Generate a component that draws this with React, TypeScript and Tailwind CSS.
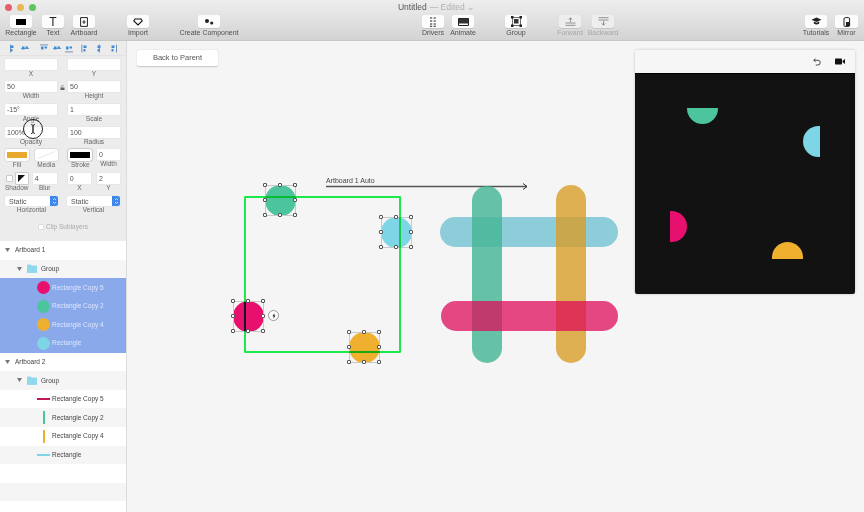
import React from "react";

const FONT = { fontFamily: '"Liberation Sans", Arial, sans-serif' };

function ToolItem({ label, ml, off, children, w }: { label: string; ml: string; off?: boolean; children: React.ReactNode; w?: string }) {
  return (
    <div className={`flex flex-col items-center ${ml} ${w ?? "w-[22px]"}`}>
      <div className={`flex h-[13px] w-full items-center justify-center rounded-[2px] shadow-[0_0.5px_0.5px_rgba(0,0,0,0.2)] ${off ? "bg-[#eeeeee]" : "bg-[#fcfcfc]"}`}>{children}</div>
      <span className={`whitespace-nowrap text-[7px] leading-[10px] ${off ? "text-[#a8a8a8]" : "text-[#505050]"}`}>{label}</span>
    </div>
  );
}

function Svg({ children, w = 12, h = 10 }: { children: React.ReactNode; w?: number; h?: number }) {
  return <svg width={w} height={h} viewBox={`0 0 ${w} ${h}`} fill="none">{children}</svg>;
}

function Field({ value, label, w = "w-[52px]" }: { value?: string; label: string; w?: string }) {
  return (
    <div className={`flex flex-col items-center ${w}`}>
      <div className="flex h-[11px] w-full items-center bg-white px-[2px] text-[7px] leading-none text-[#555] shadow-[0_0_0_0.5px_#e2e2e2]">{value}</div>
      <span className="whitespace-nowrap text-[6.5px] leading-[8px] text-[#666]">{label}</span>
    </div>
  );
}

function AlignIcon({ v, dir }: { v: number; dir: "h" | "v" }) {
  const blue = "#3f8bd9";
  return (
    <svg width="8" height="9" viewBox="0 0 8 9" fill="none">
      {dir === "v" ? (
        <>
          <rect x={v} y="0.5" width="0.8" height="8" fill="#5f7fa0" />
          <rect x="2.5" y="1.5" width="3" height="2.5" fill={blue} />
          <rect x="2.5" y="5" width="2" height="2.5" fill={blue} />
        </>
      ) : (
        <>
          <rect x="0" y={v} width="8" height="0.8" fill="#5f7fa0" />
          <rect x="1" y="2.5" width="2.5" height="3" fill={blue} />
          <rect x="4.5" y="2.5" width="2.5" height="2" fill={blue} />
        </>
      )}
    </svg>
  );
}

function Select({ label, w }: { label: string; w: string }) {
  return (
    <div className={`flex flex-col items-center ${w}`}>
      <div className="flex h-[10px] w-full items-center justify-between rounded-[2px] bg-white pl-[4px] text-[7px] leading-none text-[#555] shadow-[0_0_0_0.5px_#e2e2e2]">
        <span>Static</span>
        <span className="flex h-full w-[8px] items-center justify-center rounded-r-[2px] bg-[#3d87ee]">
          <svg width="5" height="8" viewBox="0 0 5 8" fill="none"><path d="M1 3L2.5 1.5L4 3M1 5L2.5 6.5L4 5" stroke="white" strokeWidth="0.7" /></svg>
        </span>
      </div>
      <span className="text-[6.5px] leading-[8px] text-[#666]">{label}</span>
    </div>
  );
}

function Tri() {
  return <svg width="5" height="4" viewBox="0 0 5 4"><path d="M0 0H5L2.5 4Z" fill="#777" /></svg>;
}

function Folder() {
  return (
    <svg width="10" height="9" viewBox="0 0 10 9">
      <path d="M0 1.2Q0 0.5 0.7 0.5H3.5L4.5 1.5H9.3Q10 1.5 10 2.2V8.3Q10 9 9.3 9H0.7Q0 9 0 8.3Z" fill="#8fd8ee" />
    </svg>
  );
}

function Row({ bg, pl, children, text = "text-[#444]" }: { bg: string; pl: string; children?: React.ReactNode; text?: string }) {
  return <div className={`flex h-[18.6px] items-center whitespace-nowrap text-[6.5px] ${bg} ${pl} ${text}`}>{children}</div>;
}

function Thumb({ children }: { children: React.ReactNode }) {
  return <span className="mr-[2px] flex h-[14px] w-[13px] items-center justify-center">{children}</span>;
}

function Selection({ cx, cy, color }: { cx: number; cy: number; color: string }) {
  return (
    <>
      <div className={`absolute h-[31px] w-[31px] rounded-full ${color}`} style={{ left: cx - 15.5, top: cy - 15.5 }} />
      <div className="absolute h-[31px] w-[31px] border border-[#c8c8c8]" style={{ left: cx - 15.5, top: cy - 15.5 }} />
    </>
  );
}

function Handles({ cx, cy }: { cx: number; cy: number }) {
  const pts = [-15.3, 0, 15.3];
  return (
    <>
      {pts.flatMap((dx) =>
        pts.map((dy) =>
          dx === 0 && dy === 0 ? null : (
            <div key={`${dx}${dy}`} className="absolute h-[4px] w-[4px] rounded-[1px] border border-[#555] bg-white" style={{ left: cx + dx - 2, top: cy + dy - 2 }} />
          )
        )
      )}
    </>
  );
}

export default function App() {
  return (
    <div className="flex h-[512px] w-[864px] flex-col overflow-hidden bg-[#f5f5f5]" style={FONT}>
      {/* Title + toolbar */}
      <header className="flex h-[41px] shrink-0 flex-col border-b border-[#c8c8c8] bg-gradient-to-b from-[#eeeeee] to-[#d3d3d3]">
        <div className="relative flex h-[15px] shrink-0 items-center justify-center pl-[9px] text-[8.5px] text-[#555]">
          <div className="absolute left-[4.5px] top-[3.5px] flex gap-[5px]">
            <span className="h-[7px] w-[7px] rounded-full bg-[#e4606a]" />
            <span className="h-[7px] w-[7px] rounded-full bg-[#e9b84e]" />
            <span className="h-[7px] w-[7px] rounded-full bg-[#62c364]" />
          </div>
          <span>Untitled</span>
          <span className="ml-[3px] text-[#b0b0b0]">— Edited ⌄</span>
        </div>
        <div className="flex pl-[10px]">
          <ToolItem label="Rectangle" ml="ml-0"><span className="h-[6px] w-[10px] bg-black" /></ToolItem>
          <ToolItem label="Text" ml="ml-[10px]"><span className="text-[12px] font-normal leading-none text-[#222]">T</span></ToolItem>
          <ToolItem label="Artboard" ml="ml-[9px]">
            <Svg w={8} h={10}><path d="M0.6 0.6H7.4V9.4H0.6Z" stroke="#222" strokeWidth="1" /><path d="M4 3V7M2.3 5H5.7" stroke="#222" strokeWidth="0.9" /></Svg>
          </ToolItem>
          <ToolItem label="Import" ml="ml-[32px]">
            <Svg w={10} h={8}><path d="M2 1H8L9.2 3L5 7L0.8 3Z" stroke="#111" strokeWidth="1.1" /></Svg>
          </ToolItem>
          <ToolItem label="Create Component" ml="ml-[49px]">
            <Svg w={10} h={8}><circle cx="3" cy="3" r="2" fill="#222" /><circle cx="7.7" cy="5" r="1.6" fill="#222" /></Svg>
          </ToolItem>
          <ToolItem label="Drivers" ml="ml-[202px]">
            <Svg w={8} h={10}><path d="M1 1H7M1 4H7M1 7H7M1 9.3H7" stroke="#222" strokeWidth="1.1" strokeDasharray="2.2 1.4" /></Svg>
          </ToolItem>
          <ToolItem label="Animate" ml="ml-[8px]">
            <Svg w={11} h={8}><path d="M0.5 0.5H10.5V7.5H0.5Z" stroke="#222" /><rect x="1" y="1" width="9" height="4.5" fill="#333" /></Svg>
          </ToolItem>
          <ToolItem label="Group" ml="ml-[31px]">
            <Svg w={11} h={11}><path d="M1.5 1.5H9.5V9.5H1.5Z" stroke="#333" strokeWidth="0.7" /><rect x="3" y="3" width="4.5" height="4.5" fill="#333" /><rect x="0" y="0" width="2.5" height="2.5" fill="#222" /><rect x="8.5" y="0" width="2.5" height="2.5" fill="#222" /><rect x="0" y="8.5" width="2.5" height="2.5" fill="#222" /><rect x="8.5" y="8.5" width="2.5" height="2.5" fill="#222" /></Svg>
          </ToolItem>
          <ToolItem label="Forward" ml="ml-[32px]" off>
            <Svg w={11} h={9}><path d="M0.5 6H10.5M0.5 8.3H10.5" stroke="#777" strokeWidth="0.8" /><path d="M5.5 5V1M3.8 2.6L5.5 0.8L7.2 2.6" stroke="#777" strokeWidth="0.8" /></Svg>
          </ToolItem>
          <ToolItem label="Backward" ml="ml-[11px]" off>
            <Svg w={11} h={9}><path d="M0.5 0.7H10.5M0.5 3H10.5" stroke="#777" strokeWidth="0.8" /><path d="M5.5 4V8M3.8 6.4L5.5 8.2L7.2 6.4" stroke="#777" strokeWidth="0.8" /></Svg>
          </ToolItem>
          <ToolItem label="Tutorials" ml="ml-[191px]">
            <Svg w={11} h={9}><path d="M0.5 2.8L5.5 0.5L10.5 2.8L5.5 5Z" fill="#222" /><path d="M2.8 4.4V6.5Q5.5 8.6 8.2 6.5V4.4L5.5 5.7Z" fill="#222" /></Svg>
          </ToolItem>
          <ToolItem label="Mirror" ml="ml-[8px]" w="w-[23px]">
            <Svg w={8} h={10}><path d="M1 2Q1 0.6 2.4 0.6H5.2Q6.6 0.6 6.6 2V8.6Q6.6 9.4 5.8 9.4H1.8Q1 9.4 1 8.6Z" stroke="#222" strokeWidth="1" /><rect x="3" y="5" width="4" height="4" fill="#222" /></Svg>
          </ToolItem>
        </div>
      </header>

      <div className="flex min-h-0 flex-1">
        {/* Sidebar */}
        <aside className="flex w-[127px] shrink-0 flex-col border-r border-[#dcdcdc] bg-[#ececec]">
          <div className="relative flex h-[200px] shrink-0 flex-col">
            <div className="flex h-[15px] shrink-0 items-center border-b border-[#e2e2e2] pl-[8px]">
              <AlignIcon v={2} dir="v" />
              <span className="ml-[5px]"><AlignIcon v={4} dir="h" /></span>
              <span className="ml-[11px]"><AlignIcon v={0.5} dir="h" /></span>
              <span className="ml-[5px]"><AlignIcon v={4} dir="h" /></span>
              <span className="ml-[4px]"><AlignIcon v={7.5} dir="h" /></span>
              <span className="ml-[8px]"><AlignIcon v={0.5} dir="v" /></span>
              <span className="ml-[6px]"><AlignIcon v={4} dir="v" /></span>
              <span className="ml-[6px]"><AlignIcon v={7} dir="v" /></span>
            </div>
            <div className="flex flex-col px-[5px] pt-[3px]">
              <div className="flex justify-between pr-[1px]"><Field label="X" /><Field label="Y" /></div>
              <div className="flex justify-between pr-[1px] pt-[3px]">
                <Field value="50" label="Width" />
                <svg className="mt-[4px]" width="5" height="5" viewBox="0 0 5 5"><path d="M0.5 2.5H4.5V5H0.5Z" fill="#666" /><path d="M1.4 2.5V1.4Q1.4 0.5 2.5 0.5Q3.6 0.5 3.6 1.4" fill="none" stroke="#666" strokeWidth="0.6" /></svg>
                <Field value="50" label="Height" />
              </div>
              <div className="flex justify-between pr-[1px] pt-[4px]"><Field value="-15°" label="Angle" /><Field value="1" label="Scale" /></div>
              <div className="flex justify-between pr-[1px] pt-[4px]"><Field value="100%" label="Opacity" /><Field value="100" label="Radius" /></div>
              <div className="flex justify-between pr-[1px] pt-[3px]">
                <div className="flex flex-col items-center">
                  <div className="flex h-[12px] w-[24px] items-center justify-center rounded-[2px] bg-white shadow-[0_0_0_0.5px_#ccc]"><span className="h-[6px] w-[20px] bg-[#e9a92f]" /></div>
                  <span className="text-[6.5px] leading-[8px] text-[#666]">Fill</span>
                </div>
                <div className="ml-[5px] flex flex-col items-center">
                  <div className="h-[12px] w-[23px] rounded-[2px] bg-white shadow-[0_0_0_0.5px_#ccc]">
                    <svg width="23" height="12"><path d="M3 9.5L20 2.5" stroke="#ddd" strokeWidth="0.7" /></svg>
                  </div>
                  <span className="text-[6.5px] leading-[8px] text-[#666]">Media</span>
                </div>
                <div className="ml-[10px] flex flex-col items-center">
                  <div className="flex h-[12px] w-[24px] items-center justify-center rounded-[2px] bg-white shadow-[0_0_0_0.5px_#aaa]"><span className="h-[6px] w-[20px] bg-black" /></div>
                  <span className="text-[6.5px] leading-[8px] text-[#666]">Stroke</span>
                </div>
                <Field value="0" label="Width" w="w-[23px] ml-[4px]" />
              </div>
              <div className="flex justify-between pr-[1px] pt-[4px]">
                <div className="flex flex-col items-center">
                  <div className="flex h-[11px] items-center gap-[3px]">
                    <span className="h-[7px] w-[7px] rounded-[1px] border border-[#ccc] bg-white" />
                    <span className="flex h-[11px] w-[12px] items-center justify-center bg-white shadow-[0_0_0_0.5px_#aaa]">
                      <svg width="7" height="7"><path d="M0 0H7L0 7Z" fill="#111" /></svg>
                    </span>
                  </div>
                  <span className="text-[6.5px] leading-[8px] text-[#666]">Shadow</span>
                </div>
                <Field value="4" label="Blur" w="w-[24px] ml-[3px]" />
                <Field value="0" label="X" w="w-[23px] ml-[10px]" />
                <Field value="2" label="Y" w="w-[23px] ml-[5px]" />
              </div>
              <div className="flex justify-between pr-[1px] pt-[4px]">
                <Select label="Horizontal" w="w-[53px]" />
                <Select label="Vertical" w="w-[53px]" />
              </div>
              <div className="mt-[9px] flex h-[8px] items-center justify-center text-[6.5px] text-[#aaa]">
                <span className="mr-[2px] h-[6px] w-[6px] rounded-[1px] border border-[#ddd] bg-white" />
                Clip Sublayers
              </div>
            </div>
            <div className="absolute left-[23px] top-[78px] flex h-[20px] w-[20px] items-center justify-center rounded-full border-[1.5px] border-[#222] bg-white/10">
              <svg width="6" height="10" viewBox="0 0 6 10" fill="none"><path d="M1 0.5Q3 0.5 3 2V8Q3 9.5 1 9.5M5 0.5Q3 0.5 3 2V8Q3 9.5 5 9.5" stroke="#222" strokeWidth="0.9" /></svg>
            </div>
          </div>

          <div className="flex flex-1 flex-col bg-white">
            <Row bg="bg-white" pl="pl-[5px]"><Tri /><span className="ml-[5px]">Artboard 1</span></Row>
            <Row bg="bg-[#f5f5f5]" pl="pl-[17px]"><Tri /><span className="ml-[5px]"><Folder /></span><span className="ml-[4px]">Group</span></Row>
            <Row bg="bg-[#8aa9ea]" pl="pl-[37px]" text="text-[#dce6fa]"><Thumb><span className="h-[13px] w-[13px] rounded-full bg-[#e8106e]" /></Thumb>Rectangle Copy 5</Row>
            <Row bg="bg-[#8aa9ea]" pl="pl-[37px]" text="text-[#dce6fa]"><Thumb><span className="h-[13px] w-[13px] rounded-full bg-[#4cc49e]" /></Thumb>Rectangle Copy 2</Row>
            <Row bg="bg-[#8aa9ea]" pl="pl-[37px]" text="text-[#dce6fa]"><Thumb><span className="h-[13px] w-[13px] rounded-full bg-[#efb030]" /></Thumb>Rectangle Copy 4</Row>
            <Row bg="bg-[#8aa9ea]" pl="pl-[37px]" text="text-[#dce6fa]"><Thumb><span className="h-[13px] w-[13px] rounded-full bg-[#7dd5e5]" /></Thumb>Rectangle</Row>
            <Row bg="bg-white" pl="pl-[5px]"><Tri /><span className="ml-[5px]">Artboard 2</span></Row>
            <Row bg="bg-[#f5f5f5]" pl="pl-[17px]"><Tri /><span className="ml-[5px]"><Folder /></span><span className="ml-[4px]">Group</span></Row>
            <Row bg="bg-white" pl="pl-[37px]"><Thumb><span className="h-[1.5px] w-[13px] bg-[#c2185b]" /></Thumb>Rectangle Copy 5</Row>
            <Row bg="bg-[#f5f5f5]" pl="pl-[37px]"><Thumb><span className="h-[13px] w-[2px] bg-[#4cc49e]" /></Thumb>Rectangle Copy 2</Row>
            <Row bg="bg-white" pl="pl-[37px]"><Thumb><span className="h-[13px] w-[2px] bg-[#efb030]" /></Thumb>Rectangle Copy 4</Row>
            <Row bg="bg-[#f5f5f5]" pl="pl-[37px]"><Thumb><span className="h-[1.5px] w-[13px] bg-[#7dd5e5]" /></Thumb>Rectangle</Row>
            <Row bg="bg-white" pl="pl-[37px]" />
            <Row bg="bg-[#f5f5f5]" pl="pl-[37px]" />
            <Row bg="bg-white" pl="pl-[37px]" />
          </div>
        </aside>

        {/* Canvas: free-form, coordinates are offset from its origin (127, 41) */}
        <main className="relative min-w-0 flex-1 overflow-hidden bg-[#f5f5f5]">
          <button className="absolute left-[10px] top-[9px] flex h-[16px] w-[81px] items-center justify-center rounded-[2px] bg-white text-[7.5px] text-[#555] shadow-[0_0.5px_1.5px_rgba(0,0,0,0.2)]">Back to Parent</button>

          <span className="absolute left-[199px] top-[135px] text-[7px] leading-[10px] text-[#444]">Artboard 1 Auto</span>
          <svg className="absolute left-[199px] top-[140px]" width="203" height="12" viewBox="0 0 203 12" fill="none">
            <path d="M0 5.5H201" stroke="#555" strokeWidth="1.3" />
            <path d="M197 2.5L201 5.5L197 8.5" stroke="#333" strokeWidth="1" />
          </svg>

          <Selection cx={153} cy={159} color="bg-[#4cc49e]" />
          <Selection cx={269} cy={191} color="bg-[#7dd5e5]" />
          <Selection cx={121} cy={275} color="bg-[#e8106e]" />
          <Selection cx={237} cy={306} color="bg-[#efb030]" />
          <div className="absolute left-[117px] top-[155px] h-[157px] w-[157px] rounded-[1px] border-2 border-[#1df34e] mix-blend-multiply" />
          <Handles cx={153} cy={159} />
          <Handles cx={269} cy={191} />
          <Handles cx={121} cy={275} />
          <Handles cx={237} cy={306} />
          <div className="absolute left-[141px] top-[269px] flex h-[11px] w-[11px] items-center justify-center rounded-full border border-[#999] bg-white">
            <svg width="4" height="6" viewBox="0 0 4 6"><path d="M2.6 0L0.4 3.3H1.8L1.2 6L3.6 2.5H2.2Z" fill="#222" /></svg>
          </div>

          <div className="absolute left-[313px] top-[176px] h-[30px] w-[178px] rounded-full bg-[#8ccdd9]" />
          <div className="absolute left-[345px] top-[145px] h-[177px] w-[30px] rounded-full bg-[#42b592] opacity-80" />
          <div className="absolute left-[429px] top-[144px] h-[178px] w-[30px] rounded-full bg-[#d89f29] opacity-80" />
          <div className="absolute left-[314px] top-[260px] h-[30px] w-[177px] rounded-full bg-[#de0c5a] opacity-75" />

          {/* Preview window */}
          <div className="absolute left-[508px] top-[9px] flex h-[244px] w-[220px] flex-col rounded-[2px] shadow-[0_0_3px_rgba(0,0,0,0.2)]">
            <div className="flex h-[23px] shrink-0 items-center justify-end gap-[14px] rounded-t-[2px] bg-[#f6f6f6] pr-[10px]">
              <svg width="8" height="8" viewBox="0 0 8 8" fill="none"><path d="M2.5 0.8L0.8 2.3L2.5 3.8M0.8 2.3H5.2Q7.2 2.3 7.2 4.6Q7.2 7 5 7H2.8" stroke="#222" strokeWidth="0.8" /></svg>
              <svg width="10" height="7" viewBox="0 0 10 7"><rect x="0" y="0.5" width="7" height="6" rx="0.8" fill="#111" /><path d="M7.5 3L10 1V6L7.5 4Z" fill="#111" /></svg>
            </div>
            <div className="relative flex-1 rounded-b-[2px] border-t border-[#000] bg-[#121212]">
              <div className="absolute left-[52px] top-[34px] h-[16px] w-[31px] rounded-b-full bg-[#4cc49e]" />
              <div className="absolute left-[168px] top-[52px] h-[31px] w-[17px] rounded-l-full bg-[#7dd5e5]" />
              <div className="absolute left-[35px] top-[137px] h-[31px] w-[17px] rounded-r-full bg-[#e8106e]" />
              <div className="absolute left-[137px] top-[168px] h-[17px] w-[31px] rounded-t-full bg-[#efb030]" />
            </div>
          </div>
        </main>
      </div>
    </div>
  );
}
